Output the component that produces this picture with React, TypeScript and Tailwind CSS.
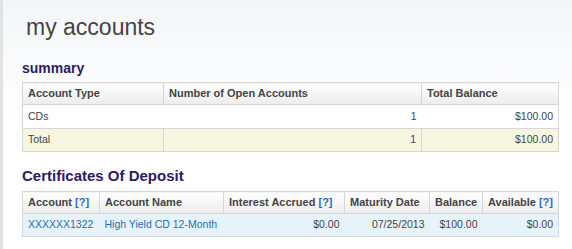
import React from 'react';

const font = { fontFamily: '"Liberation Sans", Arial, Helvetica, sans-serif' };

const Help = () => <span className="text-[#2a6db5] font-bold">[?]</span>;

const th =
  'h-[22px] border border-[#d6d6d6] bg-gradient-to-b from-white to-[#ececec] px-[5px] text-left align-middle text-[11px] font-bold text-[#444] whitespace-nowrap';
const td = 'h-[23px] border-y border-[#d6d6d6] px-[5px] align-middle text-[10.5px] whitespace-nowrap';
const num = `${td} text-right text-[#444]`;
const txt = `${td} text-[#444]`;
const link = `${td} text-[#1f6fb0]`;

export default function App() {
  return (
    <div
      className="relative h-[249px] w-[572px] overflow-hidden bg-gradient-to-b from-[#f4f5f8] via-white to-white"
      style={font}
    >
      <div className="absolute left-0 top-0 h-full w-[3px] bg-[#e2e2e2]" />
      <div className="pl-[22px]">
        <h1 className="mt-[13px] pl-[4px] text-[23px] leading-[28px] font-normal text-[#444]">my accounts</h1>

        <h2 className="mt-[18px] mb-[5px] text-[14px] leading-[18px] font-bold text-[#2d1b5e]">summary</h2>
        <table className="w-[536px] table-fixed border-collapse border border-[#d6d6d6]">
          <colgroup>
            <col className="w-[141px]" />
            <col className="w-[258px]" />
            <col className="w-[137px]" />
          </colgroup>
          <thead>
            <tr>
              <th className={th}>Account Type</th>
              <th className={th}>Number of Open Accounts</th>
              <th className={th}>Total Balance</th>
            </tr>
          </thead>
          <tbody>
            <tr className="bg-white">
              <td className={`${txt} h-[24px]`}>CDs</td>
              <td className={num}>1</td>
              <td className={num}>$100.00</td>
            </tr>
            <tr className="bg-[#f6f6e0]">
              <td className={`${txt} border-x`}>Total</td>
              <td className={`${td} border-x text-right text-[#6a2a74]`}>1</td>
              <td className={`${num} border-x`}>$100.00</td>
            </tr>
          </tbody>
        </table>

        <h2 className="mt-[15px] mb-[6px] text-[15px] leading-[18px] font-bold text-[#2d1b5e]">
          Certificates Of Deposit
        </h2>
        <table className="w-[536px] table-fixed border-collapse border border-[#d6d6d6]">
          <colgroup>
            <col className="w-[77px]" />
            <col className="w-[124px]" />
            <col className="w-[121px]" />
            <col className="w-[85px]" />
            <col className="w-[53px]" />
            <col className="w-[76px]" />
          </colgroup>
          <thead>
            <tr>
              <th className={th}>
                Account <Help />
              </th>
              <th className={th}>Account Name</th>
              <th className={th}>
                Interest Accrued <Help />
              </th>
              <th className={th}>Maturity Date</th>
              <th className={th}>Balance</th>
              <th className={th}>
                Available <Help />
              </th>
            </tr>
          </thead>
          <tbody>
            <tr className="bg-[#e6f3fb]">
              <td className={link}>XXXXXX1322</td>
              <td className={link}>High Yield CD 12-Month</td>
              <td className={num}>$0.00</td>
              <td className={num}>07/25/2013</td>
              <td className={num}>$100.00</td>
              <td className={num}>$0.00</td>
            </tr>
          </tbody>
        </table>
      </div>
    </div>
  );
}
